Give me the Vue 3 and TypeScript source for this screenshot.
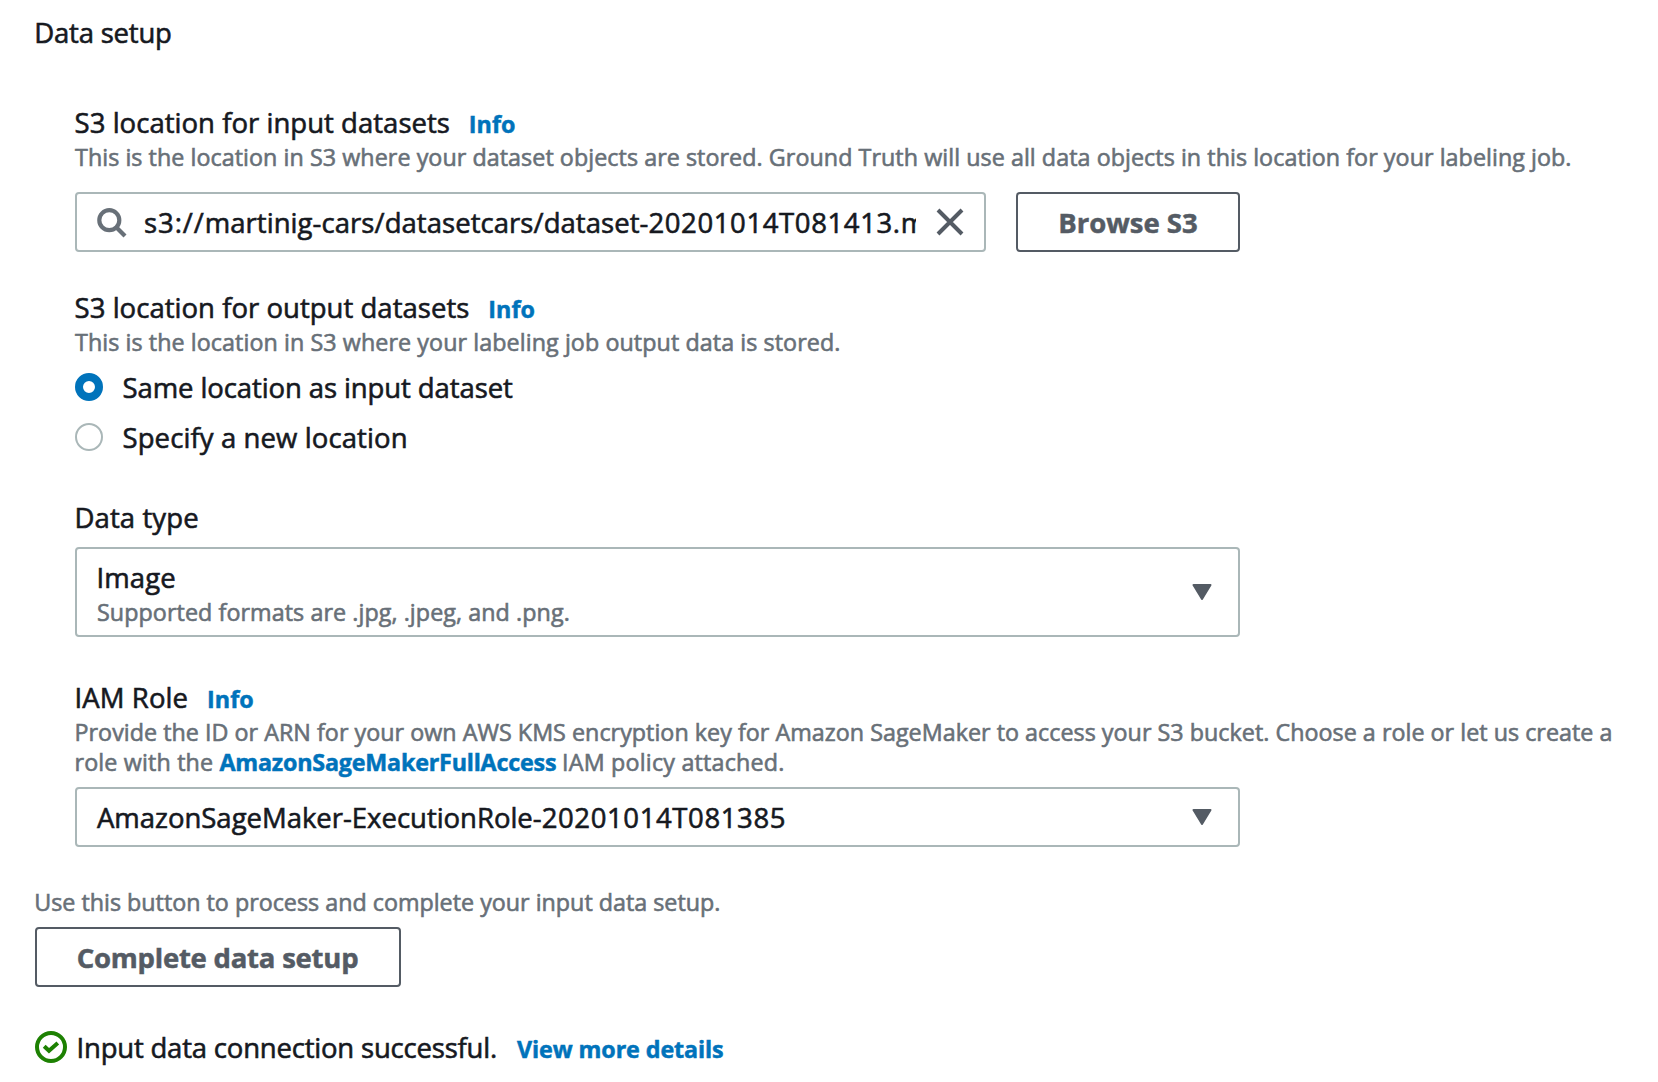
<script setup lang="ts">
import { ref } from 'vue'

const inputPath = ref({
  scheme: 's3://',
  folder: 'martinig-cars/datasetcars/dataset-',
  file: '20201014T081413.manifest',
})
const outputChoice = ref<'same' | 'new'>('same')
</script>

<template>
  <main class="page">
    <h1 class="title">Data setup</h1>

    <section class="fields">
      <div class="field field-input">
        <div class="label-row"><span class="label ls-input">S3 location for input datasets</span><a class="link info">Info</a></div>
        <p class="desc desc-input">This is the location in S3 where your dataset objects are stored. Ground Truth will use all data objects in this location for your labeling job.</p>
        <div class="s3-row">
          <div class="box search">
            <svg class="search-icon" width="30" height="30" viewBox="0 0 30 30" fill="none" stroke="#687078" stroke-width="4.2">
              <circle cx="12.3" cy="12.2" r="10" />
              <path d="M19.5 19.5L28 28" />
            </svg>
            <span class="path"><span class="scheme">{{ inputPath.scheme }}</span><span class="folder">{{ inputPath.folder }}</span><span class="digits">{{ inputPath.file }}</span></span>
            <svg class="clear" width="28" height="28" viewBox="0 0 28 28" fill="none" stroke="#545b64" stroke-width="4">
              <path d="M2 2L26 26M26 2L2 26" />
            </svg>
          </div>
          <button class="btn browse">Browse S3</button>
        </div>
      </div>

      <div class="field field-output">
        <div class="label-row"><span class="label ls-input">S3 location for output datasets</span><a class="link info">Info</a></div>
        <p class="desc desc-output">This is the location in S3 where your labeling job output data is stored.</p>
        <div class="radios">
          <div class="radio" @click="outputChoice = 'same'">
            <span class="dot" :class="{ on: outputChoice === 'same' }"></span><span class="same">Same location as input dataset</span>
          </div>
          <div class="radio" @click="outputChoice = 'new'">
            <span class="dot" :class="{ on: outputChoice === 'new' }"></span><span class="specify">Specify a new location</span>
          </div>
        </div>
      </div>

      <div class="field field-type">
        <div class="label type-label">Data type</div>
        <div class="box select">
          <div class="option">
            <div class="image">Image</div>
            <div class="desc formats">Supported formats are .jpg, .jpeg, and .png.</div>
          </div>
          <svg class="arrow" width="20" height="16" viewBox="0 0 20 16"><path d="M1.5 1H18.5L10 15Z" fill="#545b64" stroke="#545b64" stroke-width="2" stroke-linejoin="round" /></svg>
        </div>
      </div>

      <div class="field field-role">
        <div class="label-row"><span class="label role-label">IAM Role</span><a class="link info">Info</a></div>
        <p class="desc desc-role">Provide the ID or ARN for your own AWS KMS encryption key for Amazon SageMaker to access your S3 bucket. Choose a role or let us create a<br /><span class="lead">role with the </span><a class="link policy">AmazonSageMakerFullAccess</a><span class="tail"> IAM policy attached.</span></p>
        <div class="box select role-select">
          <div class="role">AmazonSageMaker-ExecutionRole-<span class="digits">20201014T081385</span></div>
          <svg class="arrow" width="20" height="16" viewBox="0 0 20 16"><path d="M1.5 1H18.5L10 15Z" fill="#545b64" stroke="#545b64" stroke-width="2" stroke-linejoin="round" /></svg>
        </div>
      </div>
    </section>

    <p class="desc hint">Use this button to process and complete your input data setup.</p>
    <button class="btn complete">Complete data setup</button>

    <div class="status">
      <svg class="ok" width="32" height="32" viewBox="0 0 32 32" fill="none" stroke="#1d8102" stroke-width="4">
        <circle cx="16" cy="16" r="14" />
        <path d="M9.2 15.2L14 19.8L22.8 12" />
      </svg>
      <span class="msg">Input data connection successful.</span>
      <a class="link details">View more details</a>
    </div>
  </main>
</template>

<style>
body {
  background: #fff;
}
</style>

<style scoped>
.page {
  box-sizing: border-box;
  width: 1658px;
  height: 1082px;
  padding: 14px 0 0 35px;
  overflow: hidden;
  font-family: "Open Sans", "Noto Sans", sans-serif;
  font-size: 27.5px;
  line-height: 37px;
  color: #16191f;
  -webkit-text-stroke: 0.6px currentColor;
  white-space: nowrap;
}
.title {
  margin: 0 0 0 -0.8px;
  font-size: inherit;
  font-weight: 400;
  letter-spacing: -0.2px;
}
.fields {
  margin: 53px 0 0 40px;
}
.label-row {
  display: flex;
  align-items: baseline;
  gap: 18.9px;
}
.ls-input {
  letter-spacing: 0.03px;
  margin-left: -0.4px;
}
.link {
  color: #0073bb;
  font-size: 23.3px;
  line-height: 30px;
  font-weight: 700;
  cursor: pointer;
  -webkit-text-stroke: 0.5px currentColor;
}
.info {
  letter-spacing: 0.05px;
}
.desc {
  margin: 1px 0 0;
  font-size: 23.3px;
  line-height: 30px;
  color: #687078;
}
.desc-input {
  letter-spacing: 0.053px;
}
.desc-output {
  letter-spacing: 0.075px;
}
.s3-row {
  display: flex;
  gap: 30px;
  margin-top: 20px;
}
.box {
  box-sizing: border-box;
  border: 2px solid #aab7b8;
  border-radius: 4px;
  background: #fff;
}
.search {
  display: flex;
  width: 911px;
  height: 60px;
  padding: 10px 21px 0 20px;
}
.search-icon {
  flex: none;
  margin-top: 4px;
}
.path {
  flex: none;
  width: 772px;
  margin-left: 17px;
  overflow: hidden;
}
.scheme {
  letter-spacing: 0.9px;
}
.folder {
  letter-spacing: 0.05px;
}
.digits {
  letter-spacing: 0.61px;
}
.clear {
  flex: none;
  margin: 4px 0 0 20px;
}
.btn {
  box-sizing: border-box;
  display: block;
  height: 60px;
  padding: 1px 0 0;
  border: 2px solid #545b64;
  border-radius: 4px;
  background: #fff;
  color: #545b64;
  font: 700 27.5px/37px "Open Sans", "Noto Sans", sans-serif;
  -webkit-text-stroke: 0.5px currentColor;
}
.browse {
  width: 224px;
}
.field-output {
  margin-top: 37px;
}
.radios {
  display: grid;
  gap: 13px;
  margin-top: 12px;
}
.radio {
  display: flex;
  gap: 19.5px;
}
.dot {
  box-sizing: border-box;
  flex: none;
  width: 28px;
  height: 28px;
  margin-top: 4px;
  border: 2px solid #aab7b8;
  border-radius: 50%;
}
.dot.on {
  border: 8px solid #0073bb;
}
.same {
  letter-spacing: -0.098px;
}
.specify {
  letter-spacing: 0.1px;
}
.field-type {
  margin-top: 43px;
}
.type-label {
  margin-left: -0.5px;
  letter-spacing: 0.1px;
}
.select {
  display: flex;
  align-items: center;
  justify-content: space-between;
  width: 1165px;
  height: 90px;
  margin-top: 11px;
  padding: 0 26px 0 20px;
}
.option {
  margin-top: 2px;
}
.image {
  margin-left: -0.5px;
  letter-spacing: 0.1px;
}
.formats {
  letter-spacing: 0.07px;
}
.field-role {
  margin-top: 42px;
}
.role-label {
  margin-left: -0.5px;
  letter-spacing: 0.1px;
}
.desc-role {
  margin-left: -0.5px;
  letter-spacing: 0.025px;
}
.lead {
  letter-spacing: 0.15px;
}
.policy {
  letter-spacing: -0.207px;
}
.tail {
  margin-left: -0.5px;
  letter-spacing: 0.2px;
}
.role-select {
  height: 60px;
  margin-top: 10px;
}
.role {
  padding-top: 1px;
  letter-spacing: -0.02px;
}
.hint {
  margin: 40px 0 0 -0.8px;
}
.complete {
  width: 366px;
  padding-right: 1px;
  margin-top: 10px;
  letter-spacing: -0.225px;
}
.status {
  display: flex;
  align-items: baseline;
  margin-top: 42px;
}
.ok {
  align-self: flex-start;
  margin-top: 2px;
}
.msg {
  margin-left: 9.5px;
  letter-spacing: -0.2px;
}
.details {
  margin-left: 20px;
  letter-spacing: -0.1px;
}
</style>
